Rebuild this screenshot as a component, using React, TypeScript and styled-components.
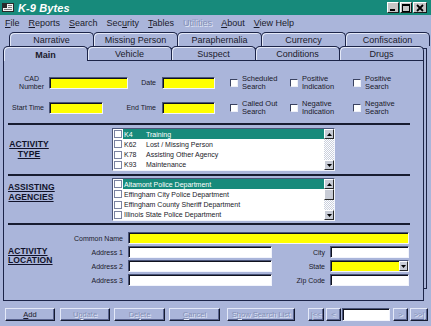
import React from "react";
import styled, { createGlobalStyle } from "styled-components";

const BG = "#aab5da";
const TEAL = "#178a7b";
const DARK = "#1c2448";
const LIGHT = "#e4e9f8";
const TEXT = "#1a1a2a";
const DIM = "#8490b6";

const GlobalStyle = createGlobalStyle`
  html, body { margin: 0; padding: 0; background: ${BG}; }
  body { font-family: "Liberation Sans", Arial, sans-serif; color: ${TEXT}; }
  *, *::before, *::after { box-sizing: border-box; }
`;

const Window = styled.div`
  width: 431px;
  height: 326px;
  overflow: hidden;
  background: ${BG};
  display: flex;
  flex-direction: column;
`;

/* ---------- title bar ---------- */
const TitleBar = styled.div`
  flex: none;
  height: 15px;
  background: ${TEAL};
  display: flex;
  align-items: center;
  padding: 0 4px 0 2px;
`;
const TitleText = styled.span`
  flex: 1;
  margin-left: 4px;
  color: #fff;
  font-size: 11px;
  font-weight: bold;
  font-style: italic;
  letter-spacing: 0.1px;
`;
const WinButtons = styled.div`
  display: flex;
  gap: 1px;
`;
const WinButton = styled.div<{ $w: number }>`
  width: ${(p) => p.$w}px;
  height: 11px;
  background: #c6c6c6;
  border: 1px solid;
  border-color: #ffffff #1a1a1a #1a1a1a #ffffff;
  display: flex;
  align-items: center;
  justify-content: center;
`;

const AppIcon = () => (
  <svg width="12" height="9" viewBox="0 0 12 9">
    <rect x="0.5" y="0.5" width="11" height="8" fill="#f2f2f2" stroke="#2a2a2a" />
    <rect x="1" y="1" width="4" height="4" fill="#2a2a2a" />
    <rect x="6" y="2" width="4" height="1" fill="#7a7a7a" />
    <rect x="6" y="4" width="4" height="1" fill="#7a7a7a" />
    <rect x="2" y="6" width="8" height="1" fill="#7a7a7a" />
  </svg>
);

/* ---------- menu ---------- */
const MenuBar = styled.div`
  flex: none;
  height: 15px;
  display: flex;
  align-items: center;
  gap: 9px;
  padding-left: 5px;
  font-size: 9px;
`;
const MenuItem = styled.span<{ $disabled?: boolean }>`
  color: ${(p) => (p.$disabled ? DIM : TEXT)};
  text-shadow: ${(p) => (p.$disabled ? `1px 1px 0 ${LIGHT}` : "none")};
`;

/* ---------- tabs ---------- */
const TabRow = styled.div<{ $indent: number; $top?: number }>`
  position: relative;
  z-index: 1;
  flex: none;
  height: 14px;
  display: flex;
  align-items: flex-start;
  margin-left: ${(p) => p.$indent}px;
  margin-top: ${(p) => p.$top ?? 0}px;
`;
const Tab = styled.div<{ $active?: boolean }>`
  width: 85px;
  height: ${(p) => (p.$active ? 15 : 14)}px;
  margin-left: -1px;
  &:first-child { margin-left: 0; }
  background: ${BG};
  border: 1px solid ${DARK};
  border-bottom: none;
  border-radius: 5px 5px 0 0;
  box-shadow: inset 1px 1px 0 ${LIGHT};
  display: flex;
  align-items: center;
  justify-content: center;
  padding-top: 1px;
  font-size: 9px;
  font-weight: ${(p) => (p.$active ? "bold" : "normal")};
  color: ${TEXT};
`;

/* ---------- panel ---------- */
const Panel = styled.div`
  flex: none;
  margin-left: 3px;
  width: 421px;
  height: 241px;
  border: 1px solid ${DARK};
  background: ${BG};
  box-shadow: 3px -12px 0 -1px ${BG}, 3px -12px 0 0 ${DARK};
  display: flex;
  flex-direction: column;
`;

const TopSection = styled.div`
  display: flex;
  flex-direction: column;
  gap: 9px;
  padding-top: 14px;
  margin-bottom: 7px;
`;
const FieldRow = styled.div`
  display: flex;
  align-items: center;
  height: 16px;
`;
const FieldLabel = styled.div<{ $w: number; $pr?: number }>`
  flex: none;
  width: ${(p) => p.$w}px;
  padding-right: ${(p) => p.$pr ?? 5}px;
  display: flex;
  justify-content: flex-end;
  text-align: center;
  font-size: 7px;
  line-height: 8px;
  white-space: nowrap;
`;
const TextBox = styled.div<{ $w?: number; $yellow?: boolean }>`
  flex: none;
  width: ${(p) => (p.$w ? `${p.$w}px` : "auto")};
  height: 12px;
  background: ${(p) => (p.$yellow ? "#ffff00" : "#ffffff")};
  border: 1px solid;
  border-color: #4a5478 #f2f4fc #f2f4fc #4a5478;
  box-shadow: inset 1px 1px 0 #10121e;
  display: flex;
  justify-content: flex-end;
`;
const CheckGroup = styled.div<{ $w?: number; $pl?: number }>`
  flex: none;
  width: ${(p) => (p.$w ? `${p.$w}px` : "auto")};
  padding-left: ${(p) => p.$pl ?? 0}px;
  display: flex;
  align-items: center;
  font-size: 7.5px;
  line-height: 8px;
  white-space: nowrap;
`;
const CheckBox = styled.span`
  flex: none;
  width: 8px;
  height: 8px;
  margin-right: 4px;
  background: #fff;
  border: 1px solid;
  border-color: #3a4260 #eef0f8 #eef0f8 #3a4260;
`;

const Divider = styled.div`
  flex: none;
  height: 2px;
  background: #181c30;
  margin: 0 13px 0 4px;
`;

const ListSection = styled.div<{ $pt: number; $pb: number }>`
  display: grid;
  grid-template-columns: 104px 223px;
  align-items: center;
  padding: ${(p) => p.$pt}px 0 ${(p) => p.$pb}px 4px;
`;
const SectionLabel = styled.div<{ $w: number; $align?: string; $shift?: number }>`
  width: ${(p) => p.$w}px;
  font-size: 8.5px;
  line-height: 9.5px;
  font-weight: bold;
  text-decoration: underline;
  text-align: ${(p) => p.$align ?? "center"};
  color: #10122a;
  letter-spacing: 0.1px;
  margin-bottom: ${(p) => p.$shift ?? 0}px;
`;
const ListBox = styled.div`
  width: 223px;
  height: 43px;
  background: #fff;
  border: 1px solid;
  border-color: #4a5478 #f2f4fc #f2f4fc #4a5478;
  display: flex;
`;
const ListItems = styled.div`
  flex: 1;
  display: flex;
  flex-direction: column;
  padding-left: 1px;
`;
const ListItem = styled.div`
  flex: 1;
  display: flex;
  align-items: center;
  font-size: 7px;
  white-space: nowrap;
  overflow: hidden;
`;
const ItemCheck = styled.span`
  flex: none;
  width: 8px;
  height: 8px;
  background: #fff;
  border: 1px solid #7a82a2;
`;
const ItemText = styled.span<{ $sel?: boolean }>`
  flex: 1;
  align-self: stretch;
  display: flex;
  align-items: center;
  margin-left: 1px;
  padding-left: 1px;
  background: ${(p) => (p.$sel ? TEAL : "transparent")};
  color: ${(p) => (p.$sel ? "#ffffff" : TEXT)};
`;
const Code = styled.span`
  width: 22px;
  flex: none;
`;
const ScrollBar = styled.div`
  flex: none;
  width: 10px;
  display: flex;
  flex-direction: column;
`;
const ScrollBtn = styled.div<{ $h?: number }>`
  flex: none;
  height: ${(p) => p.$h ?? 10}px;
  background: #c8ccd6;
  border: 1px solid;
  border-color: #ffffff #2a2a2a #2a2a2a #ffffff;
  display: flex;
  align-items: center;
  justify-content: center;
`;
const ScrollTrack = styled.div`
  flex: 1;
  background: repeating-conic-gradient(#ffffff 0 25%, #c9cfdd 0 50%) 0 0 / 2px 2px;
`;

const Arrow = ({ down }: { down?: boolean }) => (
  <svg width="5" height="3" viewBox="0 0 5 3">
    <polygon points={down ? "0,0 5,0 2.5,3" : "0,3 5,3 2.5,0"} fill="#000" />
  </svg>
);

const LocationGrid = styled.div`
  display: grid;
  grid-template-columns: 62px 58px 144px 58px 79px;
  grid-auto-rows: 12px;
  row-gap: 2px;
  align-items: center;
  padding: 7px 0 0 4px;
`;
const GridLabel = styled.div`
  text-align: right;
  padding-right: 5px;
  font-size: 7px;
  white-space: nowrap;
`;
const WideBox = styled(TextBox)`
  grid-column: span 3;
`;
const LocLabelCell = styled.div`
  grid-row: 1 / 5;
  align-self: center;
`;
const DropBtn = styled.div`
  width: 9px;
  height: 10px;
  background: #c8ccd6;
  border: 1px solid;
  border-color: #ffffff #2a2a2a #2a2a2a #ffffff;
  display: flex;
  align-items: center;
  justify-content: center;
`;

/* ---------- bottom bar ---------- */
const ButtonBar = styled.div`
  flex: none;
  height: 13px;
  margin-top: 7px;
  padding-left: 5px;
  display: flex;
`;
const Btn = styled.div<{ $w: number; $ml?: number; $disabled?: boolean }>`
  flex: none;
  width: ${(p) => p.$w}px;
  margin-left: ${(p) => p.$ml ?? 0}px;
  background: ${BG};
  border: 1px solid;
  border-color: ${LIGHT} #141a30 #141a30 ${LIGHT};
  box-shadow: inset -1px -1px 0 #5a6490;
  display: flex;
  align-items: center;
  justify-content: center;
  font-size: 7.5px;
  white-space: nowrap;
  color: ${(p) => (p.$disabled ? DIM : TEXT)};
  text-shadow: ${(p) => (p.$disabled ? `1px 1px 0 ${LIGHT}` : "none")};
`;
const NavBox = styled(TextBox)`
  height: 13px;
  margin-left: 1px;
`;

const activityTypes = [
  { code: "K4", label: "Training", sel: true },
  { code: "K62", label: "Lost / Missing Person" },
  { code: "K78", label: "Assisting Other Agency" },
  { code: "K93", label: "Maintenance" },
];
const agencies = [
  { label: "Altamont Police Department", sel: true },
  { label: "Effingham City Police Department" },
  { label: "Effingham County Sheriff Department" },
  { label: "Illinois State Police Department" },
];

export default function App() {
  return (
    <>
      <GlobalStyle />
      <Window>
        <TitleBar>
          <AppIcon />
          <TitleText>K-9 Bytes</TitleText>
          <WinButtons>
            <WinButton $w={12}>
              <svg width="8" height="8" viewBox="0 0 8 8">
                <rect x="1" y="5" width="5" height="2" fill="#000" />
              </svg>
            </WinButton>
            <WinButton $w={12}>
              <svg width="8" height="8" viewBox="0 0 8 8">
                <rect x="0.5" y="0.5" width="7" height="7" fill="none" stroke="#000" />
                <rect x="0" y="0" width="8" height="2" fill="#000" />
              </svg>
            </WinButton>
            <WinButton $w={14}>
              <svg width="8" height="8" viewBox="0 0 8 8">
                <path d="M1 1 L7 7 M7 1 L1 7" stroke="#000" strokeWidth="1.8" />
              </svg>
            </WinButton>
          </WinButtons>
        </TitleBar>

        <MenuBar>
          <MenuItem><u>F</u>ile</MenuItem>
          <MenuItem><u>R</u>eports</MenuItem>
          <MenuItem><u>S</u>earch</MenuItem>
          <MenuItem>Sec<u>u</u>rity</MenuItem>
          <MenuItem><u>T</u>ables</MenuItem>
          <MenuItem $disabled>Utilities</MenuItem>
          <MenuItem><u>A</u>bout</MenuItem>
          <MenuItem><u>V</u>iew Help</MenuItem>
        </MenuBar>

        <TabRow $indent={9} $top={2}>
          <Tab>Narrative</Tab>
          <Tab>Missing Person</Tab>
          <Tab>Paraphernalia</Tab>
          <Tab>Currency</Tab>
          <Tab>Confiscation</Tab>
        </TabRow>
        <TabRow $indent={3}>
          <Tab $active>Main</Tab>
          <Tab>Vehicle</Tab>
          <Tab>Suspect</Tab>
          <Tab>Conditions</Tab>
          <Tab>Drugs</Tab>
        </TabRow>

        <Panel>
          <TopSection>
            <FieldRow>
              <FieldLabel $w={45}>
                <span>CAD<br />Number</span>
              </FieldLabel>
              <TextBox $w={79} $yellow />
              <FieldLabel $w={34} $pr={6}>Date</FieldLabel>
              <TextBox $w={53} $yellow />
              <CheckGroup $w={75} $pl={15}>
                <CheckBox />
                <span>Scheduled<br />Search</span>
              </CheckGroup>
              <CheckGroup $w={63}>
                <CheckBox />
                <span>Positive<br />Indication</span>
              </CheckGroup>
              <CheckGroup>
                <CheckBox />
                <span>Positive<br />Search</span>
              </CheckGroup>
            </FieldRow>
            <FieldRow>
              <FieldLabel $w={45}>Start Time</FieldLabel>
              <TextBox $w={54} $yellow />
              <FieldLabel $w={59} $pr={6}>End Time</FieldLabel>
              <TextBox $w={53} $yellow />
              <CheckGroup $w={75} $pl={15}>
                <CheckBox />
                <span>Called Out<br />Search</span>
              </CheckGroup>
              <CheckGroup $w={63}>
                <CheckBox />
                <span>Negative<br />Indication</span>
              </CheckGroup>
              <CheckGroup>
                <CheckBox />
                <span>Negative<br />Search</span>
              </CheckGroup>
            </FieldRow>
          </TopSection>

          <Divider />

          <ListSection $pt={3} $pb={3}>
            <SectionLabel $w={42}>
              ACTIVITY<br />TYPE
            </SectionLabel>
            <ListBox>
              <ListItems>
                {activityTypes.map((t) => (
                  <ListItem key={t.code}>
                    <ItemCheck />
                    <ItemText $sel={t.sel}>
                      <Code>{t.code}</Code>
                      {t.label}
                    </ItemText>
                  </ListItem>
                ))}
              </ListItems>
              <ScrollBar>
                <ScrollBtn><Arrow /></ScrollBtn>
                <ScrollTrack />
                <ScrollBtn><Arrow down /></ScrollBtn>
              </ScrollBar>
            </ListBox>
          </ListSection>

          <Divider />

          <ListSection $pt={2} $pb={2}>
            <SectionLabel $w={46} $shift={14}>
              ASSISTING<br />AGENCIES
            </SectionLabel>
            <ListBox>
              <ListItems>
                {agencies.map((a) => (
                  <ListItem key={a.label}>
                    <ItemCheck />
                    <ItemText $sel={a.sel}>{a.label}</ItemText>
                  </ListItem>
                ))}
              </ListItems>
              <ScrollBar>
                <ScrollBtn><Arrow /></ScrollBtn>
                <ScrollBtn $h={11} />
                <ScrollTrack />
                <ScrollBtn><Arrow down /></ScrollBtn>
              </ScrollBar>
            </ListBox>
          </ListSection>

          <Divider />

          <LocationGrid>
            <LocLabelCell>
              <SectionLabel $w={50} $align="left" $shift={6}>
                ACTIVITY<br />LOCATION
              </SectionLabel>
            </LocLabelCell>
            <GridLabel>Common Name</GridLabel>
            <WideBox $yellow />
            <GridLabel>Address 1</GridLabel>
            <TextBox />
            <GridLabel>City</GridLabel>
            <TextBox />
            <GridLabel>Address 2</GridLabel>
            <TextBox />
            <GridLabel>State</GridLabel>
            <TextBox $yellow>
              <DropBtn><Arrow down /></DropBtn>
            </TextBox>
            <GridLabel>Address 3</GridLabel>
            <TextBox />
            <GridLabel>Zip Code</GridLabel>
            <TextBox />
          </LocationGrid>
        </Panel>

        <ButtonBar>
          <Btn $w={50}><span><u>A</u>dd</span></Btn>
          <Btn $w={50} $ml={5} $disabled><span>U<u>p</u>date</span></Btn>
          <Btn $w={51} $ml={4} $disabled><span>De<u>l</u>ete</span></Btn>
          <Btn $w={51} $ml={4} $disabled><span><u>C</u>ancel</span></Btn>
          <Btn $w={68} $ml={7} $disabled><span>S<u>h</u>ow Search List</span></Btn>
          <Btn $w={16} $ml={13} $disabled>|&lt;&lt;</Btn>
          <Btn $w={15} $ml={2} $disabled>&lt;</Btn>
          <NavBox $w={48} />
          <Btn $w={15} $ml={3} $disabled>&gt;</Btn>
          <Btn $w={18} $ml={2} $disabled>&gt;&gt;|</Btn>
        </ButtonBar>
      </Window>
    </>
  );
}
